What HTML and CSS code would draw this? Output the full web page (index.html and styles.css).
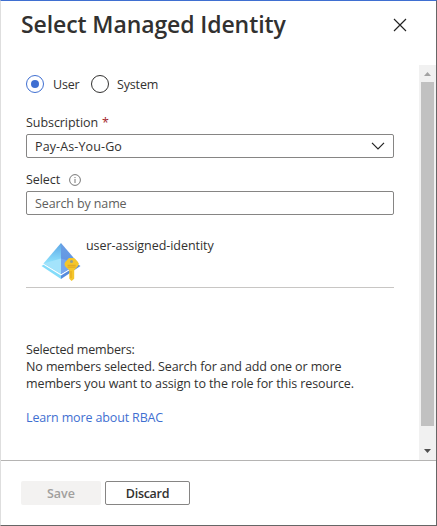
FILE: index.html
```
<!DOCTYPE html>
<html lang="en">
<head>
<meta charset="utf-8">
<title>Select Managed Identity</title>
<link rel="stylesheet" href="styles.css">
</head>
<body>
<section class="panel">
  <header class="header">
    <h1 class="title">Select Managed Identity</h1>
    <svg class="close" width="14" height="14" viewBox="0 0 14 14"><path d="M1 1 13 13M13 1 1 13" fill="none" stroke="#222" stroke-width="1.15"/></svg>
  </header>
  <div class="body">
    <main class="content">
      <div class="radios">
        <span class="radio checked"></span><span class="radio-label user">User</span>
        <span class="radio"></span><span class="radio-label system">System</span>
      </div>
      <div class="label"><span>Subscription</span><span class="required">*</span></div>
      <div class="field">
        <span class="value">Pay-As-You-Go</span>
        <svg width="14" height="8" viewBox="0 0 14 8"><path d="M1 .8 7 6.9 13 .8" fill="none" stroke="#222" stroke-width="1.2"/></svg>
      </div>
      <div class="label select-label"><span>Select</span>
        <svg class="info" width="12" height="12" viewBox="0 0 12 12"><circle cx="6" cy="6" r="5.4" fill="none" stroke="#777" stroke-width="1"/><path d="M6 5v4M6 3v1.1" stroke="#777" stroke-width="1"/></svg>
      </div>
      <div class="field search"><span>Search by name</span></div>
      <div class="identity">
        <svg class="identity-icon" width="40" height="38" viewBox="0 0 40 38">
          <defs>
            <linearGradient id="face" x1="0" y1="0" x2="0" y2="1"><stop offset="0" stop-color="#5ca6e6"/><stop offset=".6" stop-color="#8bdefb"/></linearGradient>
            <linearGradient id="side" x1="0" y1="0" x2="0" y2="1"><stop offset="0" stop-color="#6a9fe4"/><stop offset="1" stop-color="#5d90e3"/></linearGradient>
          </defs>
          <path d="M20 0 2.5 20.5 20 31Z" fill="url(#face)"/>
          <path d="M20 0 37.5 20.5 20 31Z" fill="url(#side)"/>
          <path d="M2.5 20.5 20 15.5V31Z" fill="#a3e3fb"/>
          <path d="M20 15.5 37.5 20.5 20 31Z" fill="#76a7ed"/>
          <path d="M.5 23 2.5 21.8 20 32.4V36Z" fill="#83dcfa"/>
          <path d="M20 32.4 37.5 21.8 39.5 23 20 36Z" fill="#568cdd"/>
          <g transform="translate(.3)">
            <path d="M28 15h4q1 0 1.7.8l3 3.3q1.6 2 0 4L32.9 27.3v8.4L30.3 38 28 35.8v-8.5l-4.2-4.1q-1.5-2 0-4l3.1-3.4q.5-.8 1.1-.8Z" fill="#f4c62b"/>
            <circle cx="30.2" cy="18.4" r="1.5" fill="#8e9f92"/>
            <path d="M26.3 22.3h8M26.3 24.1h8" stroke="#dba21f" stroke-width=".9"/>
            <path d="M29.7 28v7" stroke="#e3a31c"/>
          </g>
        </svg>
        <span class="identity-name">user-assigned-identity</span>
      </div>
      <div class="members">
        <div class="members-title">Selected members:</div>
        <div>No members selected. Search for and add one or more</div>
        <div>members you want to assign to the role for this resource.</div>
      </div>
      <a class="link">Learn more about RBAC</a>
    </main>
    <div class="scrollbar">
      <svg class="up" width="7" height="4" viewBox="0 0 7 4"><path d="M0 4 3.5 0 7 4Z" fill="#a3a3a3"/></svg>
      <div class="thumb"></div>
      <svg class="down" width="7" height="4" viewBox="0 0 7 4"><path d="M0 0h7L3.5 4Z" fill="#505050"/></svg>
    </div>
  </div>
  <footer class="footer">
    <span class="button save">Save</span>
    <span class="button discard">Discard</span>
  </footer>
</section>
</body>
</html>
```
FILE: styles.css
```
* { box-sizing: border-box; }
body {
  margin: 0;
  font: 12.5px/17px "Open Sans", "Noto Sans", sans-serif;
  color: #323130;
}
svg { display: block; flex: none; }
.panel {
  display: flex;
  flex-direction: column;
  width: 437px;
  height: 526px;
  background: #fff;
  border: 1px solid #666;
  border-top-color: #3f6fd1;
  border-left-color: #dedede;
}
.header {
  display: flex;
  justify-content: space-between;
  height: 64px;
  padding: 7px 29px 0 20px;
}
.title {
  margin: 0;
  font-size: 23px;
  line-height: 32px;
  font-weight: 600;
  letter-spacing: -0.1px;
  white-space: nowrap;
}
.close { margin-top: 10px; }
.body { display: flex; height: 395px; }
.content { width: 393px; padding: 10px 0 0 25px; white-space: nowrap; }
.radios { display: flex; align-items: center; height: 18px; }
.radio {
  flex: none;
  display: flex;
  width: 18px;
  height: 18px;
  border: 1px solid #323130;
  border-radius: 50%;
}
.radio.checked { border-color: #3f6fd1; align-items: center; justify-content: center; }
.radio.checked::after { content: ""; width: 8px; height: 8px; border-radius: 50%; background: #3f6fd1; }
.radio-label { padding-left: 9px; }
.radio-label.user { width: 47px; letter-spacing: -0.2px; }
.radio-label.system { padding-left: 8px; letter-spacing: -0.15px; }
.label { display: flex; height: 17px; margin-top: 21px; letter-spacing: -0.06px; }
.required { margin-left: 4px; color: #a4262c; }
.field {
  display: flex;
  align-items: center;
  justify-content: space-between;
  height: 24px;
  margin-top: 3px;
  padding: 0 8px;
  border: 1px solid #868584;
  border-radius: 2px;
}
.value { letter-spacing: 0.12px; }
.select-label { margin-top: 13px; }
.info { margin: 3px 0 0 9px; }
.search { color: #605e5c; letter-spacing: -0.12px; }
.identity {
  display: flex;
  gap: 5px;
  height: 73px;
  padding: 22px 0 0 15px;
  border-bottom: 1px solid #c8c6c4;
}
.identity-name { letter-spacing: -0.05px; }
.identity-icon { margin-top: 6px; }
.members { margin-top: 53px; letter-spacing: -0.1px; }
.members-title { letter-spacing: -0.18px; }
.link { display: block; margin-top: 17px; color: #3f6fd1; letter-spacing: -0.14px; }
.scrollbar {
  display: flex;
  flex-direction: column;
  align-items: center;
  width: 17px;
  height: 395px;
  margin-left: 25px;
  background: #f1f1f1;
}
.up { margin-top: 7px; }
.thumb { width: 13px; height: 344px; margin-top: 6px; background: #c1c1c1; }
.down { margin-top: 23px; }
.footer {
  display: flex;
  gap: 4px;
  flex: 1;
  padding: 20px 0 0 20px;
  border-top: 1px solid #b5b4b3;
}
.button {
  display: flex;
  align-items: center;
  justify-content: center;
  width: 80px;
  height: 24px;
  border-radius: 2px;
  font-weight: 600;
}
.save { background: #f3f2f1; color: #a19f9d; }
.discard { width: 85px; border: 1px solid #868584; letter-spacing: -0.3px; }
```
